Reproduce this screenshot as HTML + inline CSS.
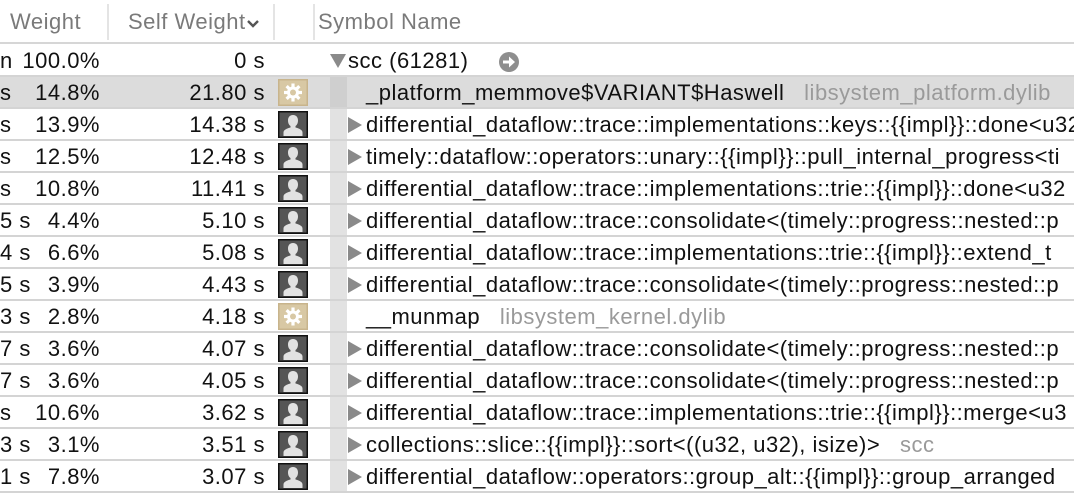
<!DOCTYPE html>
<html><head><meta charset="utf-8"><style>
*{margin:0;padding:0;box-sizing:border-box}
body{width:1074px;height:474px;overflow:hidden;background:#fff;font-family:"Liberation Sans",Helvetica,Arial,sans-serif;font-size:22px;letter-spacing:0.5px;color:#111;position:relative}
.hdr{position:absolute;left:0;top:0;width:1074px;height:44px;border-bottom:2px solid #d6d6d6;color:#7a7a7a}
.hdr span{position:absolute;top:9px}
.div{position:absolute;top:4px;width:2px;height:36px;background:#e4e4e4}
.row{position:absolute;left:0;width:1074px;height:32px;border-bottom:2px solid #d4d4d4;white-space:nowrap;overflow:hidden}
.row.sel{background:#dcdcdc}
.row span{position:absolute;top:3px}
.l{left:0}
.p{right:974px;text-align:right}
.sw{right:809px;text-align:right}
.ind{position:absolute;left:330px;top:0;width:17px;height:30px;background:#e2e2e2}
.ic{position:absolute;left:278px;top:2px;width:30px;height:27px}
.tri{position:absolute;top:8px;width:0;height:0;border-top:8px solid transparent;border-bottom:8px solid transparent;border-left:14px solid #8a8a8a}
.sym{left:366px}
.lib{color:#9a9a9a}
</style></head><body>
<div class="hdr">
<span style="left:10px">Weight</span>
<div class="div" style="left:107px"></div>
<span style="left:128px">Self Weight<svg width="14" height="10" viewBox="0 0 14 10" style="margin-left:0px"><path d="M2 2 L7 7 L12 2" stroke="#555" stroke-width="2.4" fill="none"/></svg></span>
<div class="div" style="left:273px"></div>
<div class="div" style="left:313px"></div>
<span style="left:318px">Symbol Name</span>
</div>

<div class="row" style="top:45px"><span class="l">n</span><span class="p">100.0%</span><span class="sw">0 s</span>
<div class="tri" style="left:330px;border:0;border-left:8px solid transparent;border-right:8px solid transparent;border-top:14px solid #8a8a8a;top:9px"></div>
<span style="left:348px">scc (61281)</span>
<svg style="position:absolute;left:498px;top:6px" width="22" height="22" viewBox="0 0 22 22"><circle cx="11" cy="11" r="10" fill="#8e8e8e"/><path d="M5 9.5h6v-4l6 5.5-6 5.5v-4H5z" fill="#fff"/></svg>
</div>

<div class="row sel" style="top:77px"><span class="l">s</span><span class="p">14.8%</span><span class="sw">21.80 s</span>
<svg class="ic" viewBox="0 0 30 27"><rect width="30" height="27" fill="#c8b48c"/><rect x="1.5" y="1.5" width="27" height="24" fill="#d8c8a4"/><g transform="translate(15 13.5)" fill="#fff"><circle r="6"/><rect x="-1.6" y="-9" width="3.2" height="18"/><rect x="-1.6" y="-9" width="3.2" height="18" transform="rotate(45)"/><rect x="-1.6" y="-9" width="3.2" height="18" transform="rotate(90)"/><rect x="-1.6" y="-9" width="3.2" height="18" transform="rotate(135)"/><circle r="3" fill="#d8c8a4"/></g></svg>
<div class="ind" style="background:#cfcfcf"></div>
<span style="left:366px">_platform_memmove$VARIANT$Haswell&nbsp;&nbsp;&nbsp;<span class="lib" style="position:static">libsystem_platform.dylib</span></span>
</div>

<div id="rows"></div>

<script>
var P='<svg class="ic" viewBox="0 0 30 27"><rect width="30" height="27" fill="#111"/><rect x="1.5" y="1.5" width="27" height="24" fill="#555"/><path d="M15 4c-3.5 0-5 2.5-5 5.5 0 2.5 1 4.5 2.5 5.5v1.5c-4 1-7 2.5-7 5V25h19v-3.5c0-2.5-3-4-7-5V15c1.5-1 2.5-3 2.5-5.5C20 6.5 18.5 4 15 4z" fill="#e2e2e2"/></svg>';
var G='<svg class="ic" viewBox="0 0 30 27"><rect width="30" height="27" fill="#c8b48c"/><rect x="1.5" y="1.5" width="27" height="24" fill="#d8c8a4"/><g transform="translate(15 13.5)" fill="#fff"><circle r="6"/><rect x="-1.6" y="-9" width="3.2" height="18"/><rect x="-1.6" y="-9" width="3.2" height="18" transform="rotate(45)"/><rect x="-1.6" y="-9" width="3.2" height="18" transform="rotate(90)"/><rect x="-1.6" y="-9" width="3.2" height="18" transform="rotate(135)"/><circle r="3" fill="#d8c8a4"/></g></svg>';
var d=[
["s","13.9%","14.38 s",1,"differential_dataflow::trace::implementations::keys::{{impl}}::done&lt;u32"],
["s","12.5%","12.48 s",1,"timely::dataflow::operators::unary::{{impl}}::pull_internal_progress&lt;ti"],
["s","10.8%","11.41 s",1,"differential_dataflow::trace::implementations::trie::{{impl}}::done&lt;u32"],
["5 s","4.4%","5.10 s",1,"differential_dataflow::trace::consolidate&lt;(timely::progress::nested::p"],
["4 s","6.6%","5.08 s",1,"differential_dataflow::trace::implementations::trie::{{impl}}::extend_t"],
["5 s","3.9%","4.43 s",1,"differential_dataflow::trace::consolidate&lt;(timely::progress::nested::p"],
["3 s","2.8%","4.18 s",0,"__munmap&nbsp;&nbsp;&nbsp;<span class='lib' style='position:static'>libsystem_kernel.dylib</span>"],
["7 s","3.6%","4.07 s",1,"differential_dataflow::trace::consolidate&lt;(timely::progress::nested::p"],
["7 s","3.6%","4.05 s",1,"differential_dataflow::trace::consolidate&lt;(timely::progress::nested::p"],
["s","10.6%","3.62 s",1,"differential_dataflow::trace::implementations::trie::{{impl}}::merge&lt;u3"],
["3 s","3.1%","3.51 s",1,"collections::slice::{{impl}}::sort&lt;((u32, u32), isize)&gt;&nbsp;&nbsp;&nbsp;<span class='lib' style='position:static'>scc</span>"],
["1 s","7.8%","3.07 s",1,"differential_dataflow::operators::group_alt::{{impl}}::group_arranged"]];
var h='';
d.forEach(function(r,i){var t=109+32*i;
h+='<div class="row" style="top:'+t+'px"><span class="l">'+r[0]+'</span><span class="p">'+r[1]+'</span><span class="sw">'+r[2]+'</span>'+(r[3]?P:G)+'<div class="ind"></div>'+(r[3]?'<div class="tri" style="left:348px"></div>':'')+'<span class="sym">'+r[4]+'</span></div>';});
document.getElementById('rows').innerHTML=h;
</script>
</body></html>
